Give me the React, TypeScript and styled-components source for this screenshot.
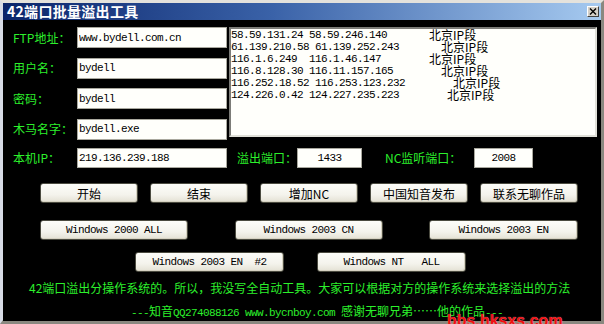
import React from 'react';
import styled, { createGlobalStyle } from 'styled-components';

const CJK = `"Noto Sans CJK SC", "Noto Sans", sans-serif`;
const MONO = `"Liberation Mono", "Noto Sans CJK SC", monospace`;
const GREEN = '#2cf02c';

const Global = createGlobalStyle`
  html, body { margin: 0; padding: 0; overflow: hidden; background: #d4d0c8; }
  #root { width: 604px; height: 324px; overflow: hidden; }
`;

const Window = styled.div`
  position: relative;
  box-sizing: border-box;
  width: 604px;
  height: 324px;
  border-style: solid;
  border-width: 3px 3px 4px 3px;
  border-color: #e4e2dc #8a8880 #8a8880 #d8dce6;
  background: #d4d0c8;
  display: flex;
  flex-direction: column;
`;

const TitleBar = styled.div`
  height: 17px;
  flex: none;
  display: flex;
  align-items: center;
  justify-content: space-between;
  padding: 0 2px 0 4px;
  background: linear-gradient(to right, #0a246a 0%, #3a62a8 45%, #a6caf0 100%);
`;

const Title = styled.div`
  color: #fff;
  font: bold 14px/17px ${CJK};
  letter-spacing: 0.3px;
`;

const CloseBtn = styled.div`
  box-sizing: border-box;
  width: 12px;
  height: 11px;
  background: #d4d0c8;
  border: 1px solid;
  border-color: #ffffff #404040 #404040 #ffffff;
  display: flex;
  align-items: center;
  justify-content: center;
`;

const Body = styled.div`
  flex: 1;
  background: #000;
  padding: 7px 4px 0 10px;
  display: flex;
  flex-direction: column;
`;

const TopSection = styled.div`
  display: flex;
  align-items: flex-start;
  gap: 2px;
`;

const Form = styled.div`
  display: grid;
  grid-template-columns: 64px 150px;
  grid-auto-rows: 21px;
  row-gap: 9.5px;
  align-items: center;
`;

const Label = styled.div<{ $w?: number; $ml?: number }>`
  color: ${GREEN};
  font: 12px/16px ${CJK};
  white-space: pre;
  ${(p) => (p.$w ? `width: ${p.$w}px; flex: none;` : '')}
  ${(p) => (p.$ml ? `margin-left: ${p.$ml}px;` : '')}
`;

const Field = styled.input<{ $w: number; $h?: number; $center?: boolean }>`
  box-sizing: border-box;
  width: ${(p) => p.$w}px;
  height: ${(p) => p.$h ?? 21}px;
  margin: 0;
  padding: 0 1px;
  border: 1px solid #a9a89e;
  background: #fffffb;
  color: #000;
  font: 11px ${MONO};
  letter-spacing: -0.6px;
  text-align: ${(p) => (p.$center ? 'center' : 'left')};
  outline: none;
`;

const TextBox = styled.div`
  box-sizing: border-box;
  width: 368px;
  height: 110px;
  border-style: solid;
  border-width: 2px;
  border-color: #7c7c78 #e0e0d8 #e0e0d8 #7c7c78;
  background: #fffffb;
  color: #000;
  font: 11px/12px ${MONO};
  letter-spacing: -0.6px;
  white-space: pre;
  overflow: hidden;
  padding: 0;
`;

const TextLine = styled.div`
  height: 12px;
  display: flex;
  align-items: center;
`;

const Region = styled.span`
  font: 12px/12px ${CJK};
  letter-spacing: 0;
`;

const Row = styled.div<{ $mt: number; $pl?: number; $gap?: number }>`
  display: flex;
  align-items: center;
  margin-top: ${(p) => p.$mt}px;
  padding-left: ${(p) => p.$pl ?? 0}px;
  gap: ${(p) => p.$gap ?? 0}px;
`;

const Button = styled.button<{ $w: number; $mono?: boolean }>`
  box-sizing: border-box;
  width: ${(p) => p.$w}px;
  height: 20px;
  margin: 0;
  padding: 0;
  border: 1px solid #4b4b40;
  border-radius: 3px;
  background: linear-gradient(#fdfdf9 0%, #f4f3ec 60%, #e4e1d4 100%);
  box-shadow: inset -1px -1px 0 #d6d2c2;
  color: #000;
  white-space: pre;
  font: ${(p) => (p.$mono ? `11px ${MONO}` : `12px ${CJK}`)};
  letter-spacing: ${(p) => (p.$mono ? '-0.6px' : '0')};
  display: flex;
  align-items: center;
  justify-content: center;
`;

const Note = styled.div<{ $mt: number; $pl: number }>`
  margin-top: ${(p) => p.$mt}px;
  padding-left: ${(p) => p.$pl}px;
  color: ${GREEN};
  font: 12px/16px ${CJK};
  white-space: pre;
`;

const Ascii = styled.span`
  font: 11px/16px ${MONO};
  letter-spacing: -0.6px;
`;

const Watermark = styled.div`
  position: absolute;
  left: 444px;
  top: 310px;
  color: #ee1010;
  font: bold 16px/16px "Liberation Sans", Arial, sans-serif;
  text-shadow: 0 0 1px #ffb0b0;
  white-space: nowrap;
`;

const lines: [string, string][] = [
  ['58.59.131.24 58.59.246.140       ', '北京IP段'],
  ['61.139.210.58 61.139.252.243       ', '北京IP段'],
  ['116.1.6.249  116.1.46.147        ', '北京IP段'],
  ['116.8.128.30 116.11.157.165        ', '北京IP段'],
  ['116.252.18.52 116.253.123.232        ', '北京IP段'],
  ['124.226.0.42 124.227.235.223        ', '北京IP段'],
];

const formFields: [string, string][] = [
  ['FTP地址：', 'www.bydell.com.cn'],
  ['用户名：', 'bydell'],
  ['密码：', 'bydell'],
  ['木马名字：', 'bydell.exe'],
];

export default function App() {
  return (
    <>
      <Global />
      <Window>
        <TitleBar>
          <Title>42端口批量溢出工具</Title>
          <CloseBtn>
            <svg width="8" height="7" viewBox="0 0 8 7">
              <path d="M1 0.5 L7 6.5 M7 0.5 L1 6.5" stroke="#000" strokeWidth="1.4" />
            </svg>
          </CloseBtn>
        </TitleBar>
        <Body>
          <TopSection>
            <Form>
              {formFields.map(([l, v]) => (
                <React.Fragment key={l}>
                  <Label>{l}</Label>
                  <Field $w={150} readOnly value={v} />
                </React.Fragment>
              ))}
            </Form>
            <TextBox>
              {lines.map(([ip, r], i) => (
                <TextLine key={i}>
                  {ip}
                  <Region>{r}</Region>
                </TextLine>
              ))}
            </TextBox>
          </TopSection>
          <Row $mt={8.5}>
            <Label $w={64}>本机IP：</Label>
            <Field $w={150} $h={20} readOnly value="219.136.239.188" />
            <Label $w={60} $ml={10}>溢出端口：</Label>
            <Field $w={65} $h={20} $center readOnly value="1433" />
            <Label $w={89} $ml={23}>NC监听端口：</Label>
            <Field $w={59} $h={20} $center readOnly value="2008" />
          </Row>
          <Row $mt={15} $pl={27} $gap={12}>
            <Button $w={98}>开始</Button>
            <Button $w={98}>结束</Button>
            <Button $w={98}>增加NC</Button>
            <Button $w={98}>中国知音发布</Button>
            <Button $w={98}>联系无聊作品</Button>
          </Row>
          <Row $mt={17} $pl={27} $gap={46.5}>
            <Button $w={148} $mono>Windows 2000 ALL</Button>
            <Button $w={148} $mono>Windows 2003 CN</Button>
            <Button $w={149} $mono>Windows 2003 EN</Button>
          </Row>
          <Row $mt={12} $pl={122} $gap={33}>
            <Button $w={149} $mono>{'Windows 2003 EN  #2'}</Button>
            <Button $w={149} $mono>{'Windows NT   ALL'}</Button>
          </Row>
          <Note $mt={8} $pl={16}>
            42端口溢出分操作系统的。所以，我没写全自动工具。大家可以根据对方的操作系统来选择溢出的方法
          </Note>
          <Note $mt={7} $pl={118}>
            <Ascii>---</Ascii>知音<Ascii>QQ274088126 www.bycnboy.com </Ascii>感谢无聊兄弟……他的作品<Ascii>---</Ascii>
          </Note>
        </Body>
        <Watermark>bbs.hksxs.com</Watermark>
      </Window>
    </>
  );
}
